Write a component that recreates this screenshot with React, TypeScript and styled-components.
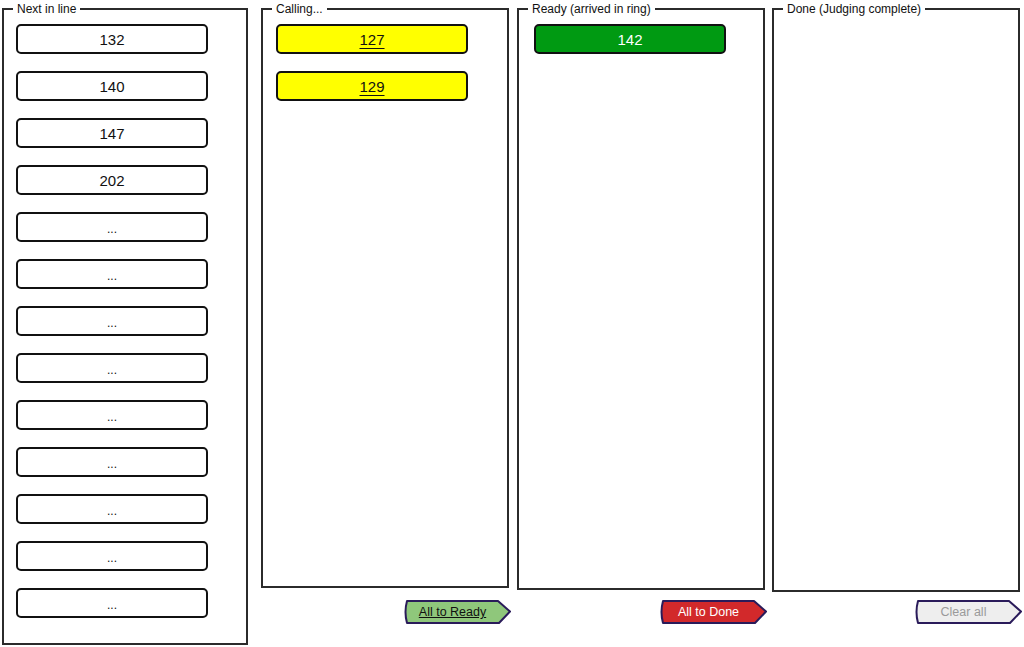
import React from 'react'
import styled, { createGlobalStyle } from 'styled-components'

const GlobalStyle = createGlobalStyle`
  html, body {
    margin: 0;
    padding: 0;
    background: #ffffff;
    font-family: "Liberation Sans", Arial, sans-serif;
    color: #111;
  }
`;

const Board = styled.div`
  display: flex;
  align-items: flex-start;
  padding: 2px 0 0 2px;
  width: 1024px;
  height: 647px;
  box-sizing: border-box;
`;

const Column = styled.div<{ $gap: number }>`
  display: flex;
  flex-direction: column;
  align-items: flex-end;
  justify-content: space-between;
  width: 248px;
  height: 623px;
  margin-right: ${(p) => p.$gap}px;
`;

const QueueColumn = styled.div`
  width: 246px;
  margin-right: 13px;
`;

const Panel = styled.fieldset<{ $height: number; $inset?: number }>`
  box-sizing: border-box;
  width: 100%;
  height: ${(p) => p.$height}px;
  flex: none;
  margin: 0;
  padding: 8px 12px 0 ${(p) => p.$inset ?? 12}px;
  border: 2px solid #2b2b2b;
  display: flex;
  flex-direction: column;
  gap: 17px;

  legend {
    margin-left: ${(p) => 9 - (p.$inset ?? 12)}px;
  }
`;

const Legend = styled.legend`
  font-size: 12px;
  line-height: 14px;
  padding: 0 4px;
  color: #111;
`;

const Slot = styled.div<{ $kind?: 'calling' | 'ready' }>`
  box-sizing: border-box;
  width: 192px;
  height: 30px;
  flex: none;
  border: 2px solid #111;
  border-radius: 5px;
  display: flex;
  align-items: center;
  justify-content: center;
  font-size: 15px;
  background: ${(p) => (p.$kind === 'calling' ? '#ffff00' : p.$kind === 'ready' ? '#009a12' : '#ffffff')};
  color: ${(p) => (p.$kind === 'ready' ? '#ffffff' : '#111')};
  text-decoration: ${(p) => (p.$kind === 'calling' ? 'underline' : 'none')};
  text-underline-offset: 3px;
`;

const Dots = styled.span`
  font-size: 12px;
  padding-top: 4px;
`;

const ActionButton = styled.button<{ $text: string; $underline?: boolean }>`
  position: relative;
  flex: none;
  width: 109px;
  height: 26px;
  margin-right: -3px;
  padding: 0 14px 0 4px;
  border: none;
  background: transparent;
  font-family: inherit;
  font-size: 12.5px;
  color: ${(p) => p.$text};
  text-decoration: ${(p) => (p.$underline ? 'underline' : 'none')};
  cursor: pointer;

  svg {
    position: absolute;
    inset: 0;
    z-index: 0;
  }

  span {
    position: relative;
    z-index: 1;
  }
`;

const ArrowShape = ({ fill }: { fill: string }) => (
  <svg width="109" height="26" viewBox="0 0 109 26">
    <path
      d="M4 2 L95 2 L107 12.5 L96 24 L4 24 Q1 13 4 2 Z"
      fill={fill}
      stroke="#2a1b5a"
      strokeWidth="2"
      strokeLinejoin="round"
    />
  </svg>
);

const Action = ({ label, fill, text, underline }: { label: string; fill: string; text: string; underline?: boolean }) => (
  <ActionButton $text={text} $underline={underline}>
    <ArrowShape fill={fill} />
    <span>{label}</span>
  </ActionButton>
);

const queue = ['132', '140', '147', '202', ...Array(9).fill('...')];

export default function App() {
  return (
    <>
      <GlobalStyle />
      <Board>
        <QueueColumn>
          <Panel $height={643}>
            <Legend>Next in line</Legend>
            {queue.map((n, i) => (
              <Slot key={i}>{n === '...' ? <Dots>...</Dots> : n}</Slot>
            ))}
          </Panel>
        </QueueColumn>

        <Column $gap={8}>
          <Panel $height={586} $inset={13}>
            <Legend>Calling...</Legend>
            <Slot $kind="calling">127</Slot>
            <Slot $kind="calling">129</Slot>
          </Panel>
          <Action label="All to Ready" fill="#8fc77b" text="#111" underline />
        </Column>

        <Column $gap={7}>
          <Panel $height={588} $inset={15}>
            <Legend>Ready (arrived in ring)</Legend>
            <Slot $kind="ready">142</Slot>
          </Panel>
          <Action label="All to Done" fill="#d2292b" text="#ffffff" />
        </Column>

        <Column $gap={0}>
          <Panel $height={590}>
            <Legend>Done (Judging complete)</Legend>
          </Panel>
          <Action label="Clear all" fill="#eeeeee" text="#9a9a9a" />
        </Column>
      </Board>
    </>
  );
}
